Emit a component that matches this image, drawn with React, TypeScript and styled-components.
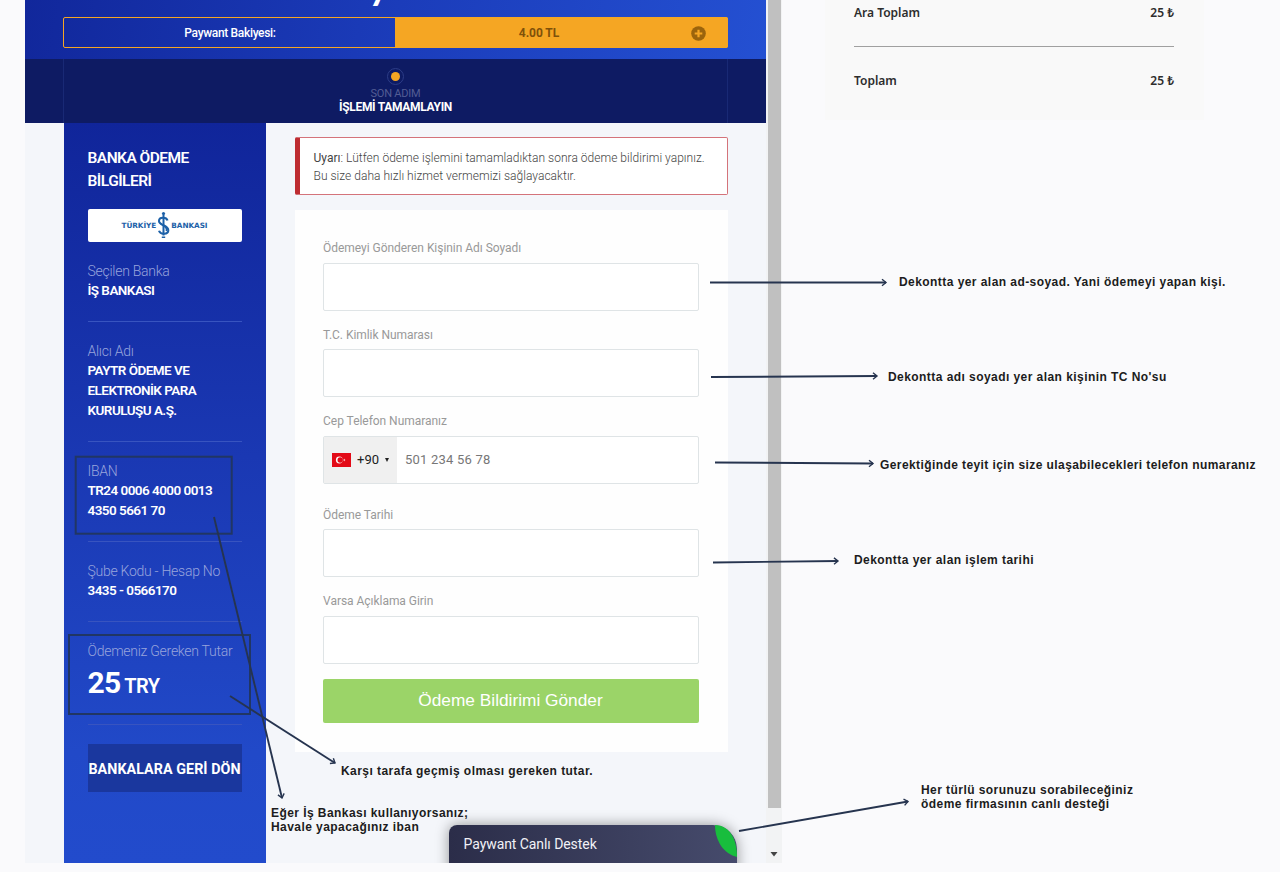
import React from "react";
import styled, { createGlobalStyle } from "styled-components";

const Global = createGlobalStyle`
  * { box-sizing: border-box; }
  body { margin: 0; background: #fafafc; overflow: hidden; }
`;

const Page = styled.div`
  position: relative;
  width: 1280px;
  height: 872px;
  padding-left: 25px;
  display: flex;
  align-items: flex-start;
  overflow: hidden;
  background: #fafafc;
  font-family: Roboto, "Liberation Sans", sans-serif;
`;

const Frame = styled.div`
  position: relative;
  display: flex;
  width: 757px;
  height: 863px;
  overflow: hidden;
  background: #f4f6fa;
`;

const Checkout = styled.main`
  width: 741px;
  height: 863px;
  display: flex;
  flex-direction: column;
`;

const Header = styled.header`
  position: relative;
  height: 59px;
  padding: 17px 38px 0 38px;
  background: linear-gradient(100deg, #11279b 0%, #1b3cba 50%, #2450d2 100%);
`;

const Brand = styled.div`
  position: absolute;
  left: 4px;
  right: 0;
  top: -34px;
  text-align: center;
  font: 900 35px/40px Lato, sans-serif;
  letter-spacing: -0.5px;
  color: #fff;
`;

const Balance = styled.div`
  display: flex;
  height: 31px;
  border: 1px solid #f5a623;
  border-radius: 2px;
  font-size: 12px;
  line-height: 31px;
  font-weight: 500;
  text-align: center;
`;

const BalanceLabel = styled.div`
  width: 332px;
  color: #fff;
  letter-spacing: -0.33px;
`;

const BalanceValue = styled.div`
  position: relative;
  flex: 1;
  margin: -1px;
  padding: 2px 45px 0 0;
  border-radius: 0 2px 2px 0;
  background: #f5a623;
  color: #7f510a;
  font-weight: 700;
  letter-spacing: -0.05px;
  display: flex;
  align-items: center;
  justify-content: center;
`;

const PlusIcon = styled.svg`
  position: absolute;
  right: 22px;
  top: 9px;
`;

const Steps = styled.div`
  height: 64px;
  padding: 0 38px;
  background: #0e1b63;
`;

const StepBody = styled.div`
  height: 64px;
  padding-top: 9px;
  display: flex;
  flex-direction: column;
  align-items: center;
  border: solid rgba(70, 90, 180, 0.22);
  border-width: 0 1px;
`;

const StepDot = styled.div`
  width: 17px;
  height: 17px;
  border: 1px solid #2c3c87;
  border-radius: 50%;
  display: flex;
  align-items: center;
  justify-content: center;
  &::after {
    content: "";
    width: 9px;
    height: 9px;
    border-radius: 50%;
    background: #f5a623;
  }
`;

const StepLabel = styled.div`
  margin-top: 2px;
  font-size: 11px;
  line-height: 13px;
  color: #535d94;
  letter-spacing: -0.2px;
`;

const StepTitle = styled.div`
  font-size: 12px;
  line-height: 14px;
  font-weight: 700;
  color: #fff;
  letter-spacing: -0.3px;
`;

const Content = styled.div`
  flex: 1;
  display: flex;
  padding-left: 38.5px;
`;

const Sidebar = styled.aside`
  width: 202px;
  height: 740px;
  padding: 24px 24px 0;
  background: linear-gradient(180deg, #10259a 0%, #1a38b3 45%, #2149c8 85%, #224bcc 100%);
  color: #fff;
`;

const SideTitle = styled.h2`
  margin: 0;
  font-size: 15.5px;
  line-height: 23px;
  font-weight: 600;
  letter-spacing: -0.52px;
`;

const BankLogo = styled.div`
  height: 33px;
  margin-top: 16px;
  margin-bottom: 19px;
  width: 154px;
  border-radius: 2px;
  background: #fff;
  display: flex;
  justify-content: center;
  align-items: center;
  color: #1d61a8;
  font: 700 7.3px/10px "DejaVu Sans", sans-serif;
  letter-spacing: -0.05px;
`;

const SideItem = styled.section<{ $height: number }>`
  height: ${(p) => p.$height}px;
  width: 154px;
  margin-bottom: 19px;
  border-bottom: 1px solid #3854c0;
`;

const SideLabel = styled.div`
  font-size: 14px;
  line-height: 20px;
  font-weight: 300;
  letter-spacing: -0.27px;
  color: #98a4dc;
  white-space: nowrap;
`;

const SideValue = styled.div`
  margin-top: -1px;
  font-size: 13.5px;
  line-height: 20px;
  font-weight: 600;
  letter-spacing: -0.54px;
  white-space: pre;
`;

const Amount = styled.div`
  margin-top: 2px;
  font-size: 20px;
  line-height: 40px;
  font-weight: 600;
  letter-spacing: -0.5px;
  b { font-size: 30px; font-weight: 700; letter-spacing: -0.8px; }
`;

const BackButton = styled.button`
  display: block;
  width: 154px;
  height: 48px;
  padding: 2px 0 0;
  border: 0;
  background: #1a379e;
  color: #fff;
  font: 700 14.3px Roboto, sans-serif;
  letter-spacing: 0.05px;
  white-space: nowrap;
`;

const Main = styled.div`
  width: 433px;
  margin-left: 29px;
  padding-top: 14px;
`;

const Alert = styled.div`
  height: 58px;
  padding: 11px 0 0 14px;
  border: 1px solid #d4737a;
  border-left: 5px solid #be2c31;
  border-radius: 2px;
  background: #fff;
  font-size: 12px;
  line-height: 18px;
  font-weight: 300;
  letter-spacing: 0.03px;
  color: #444;
  white-space: nowrap;
  strong { font-weight: 400; }
`;

const Card = styled.form`
  height: 542px;
  margin-top: 15px;
  padding: 28px 29px 0 28px;
  background: #fefefe;
`;

const Field = styled.div<{ $gap: number }>`
  margin-bottom: ${(p) => p.$gap}px;
`;

const Label = styled.label`
  display: block;
  height: 25px;
  padding: 0.2px 0 0 0.6px;
  font-size: 12px;
  line-height: 20px;
  letter-spacing: -0.04px;
  color: #999;
`;

const InputBox = styled.div`
  display: flex;
  height: 48px;
  border: 1px solid #dfe4e6;
  border-radius: 2px;
  background: #fff;
  align-items: center;
`;

const Prefix = styled.div`
  width: 73px;
  height: 46px;
  padding-left: 8px;
  display: flex;
  align-items: center;
  background: #f0f0f0;
  font-size: 13px;
  color: #222;
`;

const Code = styled.span`
  margin: 0 6px 0 6.5px;
`;

const Placeholder = styled.span`
  margin-left: 8.5px;
  font-size: 13px;
  letter-spacing: 0.22px;
  color: #777;
`;

const Submit = styled.button`
  display: block;
  width: 376px;
  height: 44px;
  padding: 0;
  border: 0;
  border-radius: 2px;
  background: #9bd468;
  color: #fff;
  font: 17.3px "Liberation Sans", sans-serif;
`;

const Scrollbar = styled.div`
  width: 16px;
  padding-left: 2px;
  background: #f2f3f4;
  display: flex;
  flex-direction: column;
  justify-content: space-between;
`;

const Thumb = styled.div`
  width: 13px;
  height: 808px;
  background: #c0c0c0;
`;

const ScrollArrow = styled.svg`
  margin: 0 0 6px 2px;
`;

const Chat = styled.div`
  position: absolute;
  left: 423.5px;
  top: 825px;
  width: 288px;
  height: 60px;
  padding: 8px 15px;
  border-radius: 8px 24px 0 0;
  background: linear-gradient(90deg, #2b2d49, #464b6c);
  box-shadow: 0 0 14px rgba(0, 0, 0, 0.4);
  color: #f1f1f6;
  font-size: 14px;
  line-height: 22px;
  letter-spacing: -0.07px;
`;

const ChatLeaf = styled.svg`
  position: absolute;
  right: 0;
  top: 0;
`;

const Summary = styled.aside`
  width: 379px;
  height: 120px;
  margin-left: 43px;
  padding: 3px 30px 0 29px;
  background: #f9f9f9;
  font-family: "Noto Sans", sans-serif;
  font-size: 12px;
  font-weight: 600;
  color: #2d2d2d;
`;

const SummaryRow = styled.div`
  display: flex;
  justify-content: space-between;
  line-height: 20px;
`;

const SummaryLine = styled.div`
  height: 1px;
  margin: 23px 0 24px;
  background: #a0a0a0;
`;

const Drawing = styled.svg`
  position: absolute;
  left: 0;
  top: 0;
  pointer-events: none;
`;

const Note = styled.div<{ $x: number; $y: number; $spacing?: number }>`
  position: absolute;
  left: ${(p) => p.$x}px;
  top: ${(p) => p.$y}px;
  font: 700 12px/14px "Liberation Sans", sans-serif;
  letter-spacing: ${(p) => p.$spacing ?? 0.44}px;
  color: #1c1c20;
  white-space: pre;
`;

const arrows = [
  [710, 282.5, 886, 282.5],
  [711, 377, 877, 376],
  [715, 462.5, 873, 463.5],
  [713, 562.5, 838, 561],
  [739, 831, 908, 801.5],
  [230, 696, 335, 763],
  [214, 517, 282, 798],
];

function Arrow({ points }: { points: number[] }) {
  const [x1, y1, x2, y2] = points;
  const angle = (Math.atan2(y2 - y1, x2 - x1) * 180) / Math.PI;
  return (
    <g stroke="#26344f" strokeWidth="1.9" fill="none">
      <line x1={x1} y1={y1} x2={x2} y2={y2} />
      <path d="M-4 -3.2L0 0L-4 3.2" strokeWidth="1.4" transform={`translate(${x2} ${y2}) rotate(${angle})`} />
    </g>
  );
}

const fields = [
  { label: "Ödemeyi Gönderen Kişinin Adı Soyadı", gap: 13.4 },
  { label: "T.C. Kimlik Numarası", gap: 13.6 },
  { label: "Cep Telefon Numaranız", gap: 20.4, phone: true },
  { label: "Ödeme Tarihi", gap: 13.6 },
  { label: "Varsa Açıklama Girin", gap: 14.6 },
];

export default function App() {
  return (
    <Page>
      <Global />
      <Frame>
        <Checkout>
          <Header>
            <Brand>Paywant</Brand>
            <Balance>
              <BalanceLabel>Paywant Bakiyesi:</BalanceLabel>
              <BalanceValue>
                4.00 TL
                <PlusIcon width="15" height="15" viewBox="0 0 15 15">
                  <circle cx="7.5" cy="7.5" r="7.3" fill="#9b640c" />
                  <path d="M7.5 3.7v7.6M3.7 7.5h7.6" stroke="#f5a623" strokeWidth="2.2" />
                </PlusIcon>
              </BalanceValue>
            </Balance>
          </Header>
          <Steps>
            <StepBody>
              <StepDot />
              <StepLabel>SON ADIM</StepLabel>
              <StepTitle>İŞLEMİ TAMAMLAYIN</StepTitle>
            </StepBody>
          </Steps>
          <Content>
            <Sidebar>
              <SideTitle>BANKA ÖDEME<br />BİLGİLERİ</SideTitle>
              <BankLogo>
                <span>TÜRKİYE</span>
                <svg width="15" height="27" viewBox="0 0 15 27" fill="none" stroke="#1d61a8">
                  <path d="M7.5 3v20.500" strokeWidth="2" />
                  <circle cx="7.5" cy="1.600" r="1.600" fill="#1d61a8" stroke="none" />
                  <path d="M11.5 8.5C10.5 5 3 4.700 3 9c0 4.500 9.300 4 9.300 9.200 0 4.600-8 4.600-9.300.6" strokeWidth="2.1" />
                  <path d="M4.500 11.500c2.500 2.200 7.500 3.200 5.800 7.500M5.800 25.300h3.400" strokeWidth="1.600" />
                </svg>
                <span>BANKASI</span>
              </BankLogo>
              <SideItem $height={61}>
                <SideLabel>Seçilen Banka</SideLabel>
                <SideValue>İŞ BANKASI</SideValue>
              </SideItem>
              <SideItem $height={101}>
                <SideLabel>Alıcı Adı</SideLabel>
                <SideValue>{"PAYTR ÖDEME VE\nELEKTRONİK PARA\nKURULUŞU A.Ş."}</SideValue>
              </SideItem>
              <SideItem $height={81}>
                <SideLabel>IBAN</SideLabel>
                <SideValue>{"TR24 0006 4000 0013\n4350 5661 70"}</SideValue>
              </SideItem>
              <SideItem $height={61}>
                <SideLabel>Şube Kodu - Hesap No</SideLabel>
                <SideValue>3435 - 0566170</SideValue>
              </SideItem>
              <SideItem $height={84}>
                <SideLabel>Ödemeniz Gereken Tutar</SideLabel>
                <Amount><b>25</b> TRY</Amount>
              </SideItem>
              <BackButton>BANKALARA GERİ DÖN</BackButton>
            </Sidebar>
            <Main>
              <Alert>
                <strong>Uyarı</strong>: Lütfen ödeme işlemini tamamladıktan sonra ödeme bildirimi yapınız.<br />
                Bu size daha hızlı hizmet vermemizi sağlayacaktır.
              </Alert>
              <Card>
                {fields.map((f) => (
                  <Field key={f.label} $gap={f.gap}>
                    <Label>{f.label}</Label>
                    <InputBox>
                      {f.phone && (
                        <>
                          <Prefix>
                            <svg width="19" height="14" viewBox="0 0 19 14">
                              <rect width="19" height="14" fill="#e30a17" />
                              <circle cx="7.300" cy="7" r="3.400" fill="#fff" />
                              <circle cx="8.200" cy="7" r="2.700" fill="#e30a17" />
                              <path d="M12.600 5.500l-.5 1.100-1.300.4 1.300.4.500 1.100.1-1.200 1-.3-1-.3z" fill="#fff" />
                            </svg>
                            <Code>+90</Code>
                            <svg width="4" height="4"><path d="M0 0h4L2 4z" fill="#222" /></svg>
                          </Prefix>
                          <Placeholder>501 234 56 78</Placeholder>
                        </>
                      )}
                    </InputBox>
                  </Field>
                ))}
                <Submit type="button">Ödeme Bildirimi Gönder</Submit>
              </Card>
            </Main>
          </Content>
        </Checkout>
        <Scrollbar>
          <Thumb />
          <ScrollArrow width="8" height="5"><path d="M0.500 0h7L4 4.500z" fill="#444" /></ScrollArrow>
        </Scrollbar>
        <Chat>
          Paywant Canlı Destek
          <ChatLeaf width="22" height="32" viewBox="0 0 22 32">
            <path d="M0 0C13 0 22 12 22 32C9 29 0 16 0 0z" fill="#18bd3d" />
          </ChatLeaf>
        </Chat>
      </Frame>
      <Summary>
        <SummaryRow><span>Ara Toplam</span><span>25 ₺</span></SummaryRow>
        <SummaryLine />
        <SummaryRow><span>Toplam</span><span>25 ₺</span></SummaryRow>
      </Summary>
      <Drawing width="1280" height="872">
        <g fill="none" stroke="#213663" strokeWidth="2">
          <rect x="75.700" y="456.700" width="156" height="77" />
          <rect x="69" y="635" width="181" height="79" />
        </g>
        {arrows.map((a, i) => <Arrow key={i} points={a} />)}
      </Drawing>
      <Note $x={899} $y={275}>Dekontta yer alan ad-soyad. Yani ödemeyi yapan kişi.</Note>
      <Note $x={888} $y={370}>Dekontta adı soyadı yer alan kişinin TC No'su</Note>
      <Note $x={880} $y={458} $spacing={0.41}>Gerektiğinde teyit için size ulaşabilecekleri telefon numaranız</Note>
      <Note $x={854} $y={553}>Dekontta yer alan işlem tarihi</Note>
      <Note $x={921} $y={783}>{"Her türlü sorunuzu sorabileceğiniz\nödeme firmasının canlı desteği"}</Note>
      <Note $x={341} $y={764}>Karşı tarafa geçmiş olması gereken tutar.</Note>
      <Note $x={271} $y={806}>{"Eğer İş Bankası kullanıyorsanız;\nHavale yapacağınız iban"}</Note>
    </Page>
  );
}
